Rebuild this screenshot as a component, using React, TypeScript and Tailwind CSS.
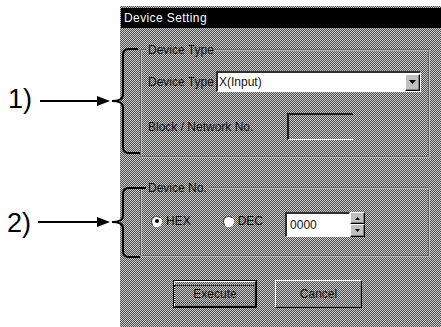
import React from "react";

const dither =
  "bg-[image:repeating-conic-gradient(#4a4a4a_0%_25%,#cfcfcf_0%_50%)] bg-[length:2px_2px]";

const Bevel = ({ className = "", children }: { className?: string; children?: React.ReactNode }) => (
  <div
    className={`border-t border-l border-t-white border-l-white border-r border-b border-r-black border-b-black bg-[#c0c0c0] shadow-[inset_-1px_-1px_0_#808080] ${className}`}
  >
    {children}
  </div>
);

const Radio = ({ label, checked }: { label: string; checked?: boolean }) => (
  <div className="flex items-center gap-[4px]">
    <span className="flex h-[11px] w-[11px] items-center justify-center rounded-full border border-t-[#404040] border-l-[#404040] border-r-white border-b-white bg-white">
      {checked && <span className="h-[4px] w-[4px] rounded-full bg-black" />}
    </span>
    <span>{label}</span>
  </div>
);

const App = () => {
  return (
    <div className="relative flex h-[327px] w-[441px] overflow-hidden bg-white font-['Liberation_Sans',Arial,sans-serif] text-black">
      {/* annotation labels */}
      <div className="w-[120px] shrink-0 text-[27px] leading-none">
        <div className="pl-[8px] pt-[86px]">1)</div>
        <div className="mt-[97px] pl-[7px]">2)</div>
      </div>

      {/* dialog */}
      <div className={`mt-[6px] flex flex-1 flex-col pt-[2px] text-[12px] leading-[14px] text-[#111] ${dither}`}>
        <div className="ml-[1px] flex h-[20px] items-center bg-black pl-[3px] tracking-[0.4px] text-white">
          Device Setting
        </div>

        <fieldset className="ml-[20px] mr-[11px] mt-[15px] border-2 border-[#b8b8b8] [border-style:groove] pb-[16px] pl-[6px] pt-[14px]">
          <legend className="-ml-[1px] px-[1px]">Device Type</legend>
          <div className="flex items-center">
            <span className="w-[68px]">Device Type</span>
            <div className="flex h-[21px] w-[205px] items-center border-t-2 border-l-2 border-t-[#303030] border-l-[#303030] border-b border-r border-b-white border-r-white bg-white pl-[1px]">
              <span className="flex-1">X(Input)</span>
              <Bevel className="flex h-[17px] w-[15px] items-center justify-center">
                <svg width="7" height="4" viewBox="0 0 7 4">
                  <path d="M0 0h7L3.5 4z" fill="#000" />
                </svg>
              </Bevel>
            </div>
          </div>
          <div className="mt-[21px] flex items-center">
            <span className="w-[139px]">Block / Network No.</span>
            <div className="h-[27px] w-[66px] border-t-2 border-l-2 border-t-[#202020] border-l-[#202020] border-b border-b-white" />
          </div>
        </fieldset>

        <fieldset className="ml-[20px] mr-[11px] mt-[23px] border-2 border-[#b8b8b8] [border-style:groove] pb-[18px] pl-[9px] pt-[17px]">
          <legend className="-ml-[4px] px-[1px]">Device No.</legend>
          <div className="flex items-start">
            <div className="mt-[2px] flex gap-[32px]">
              <Radio label="HEX" checked />
              <Radio label="DEC" />
            </div>
            <div className="ml-[22px] flex">
              <div className="flex h-[25px] w-[65px] items-center border-t-2 border-l-2 border-t-[#303030] border-l-[#303030] border-b border-r border-b-white border-r-white bg-white pl-[3px]">
                0000
              </div>
              <div className="flex w-[15px] flex-col">
                <Bevel className="flex h-[12px] items-center justify-center">
                  <svg width="5" height="3" viewBox="0 0 5 3">
                    <path d="M2.5 0L5 3H0z" fill="#000" />
                  </svg>
                </Bevel>
                <Bevel className="flex h-[13px] items-center justify-center">
                  <svg width="5" height="3" viewBox="0 0 5 3">
                    <path d="M0 0h5L2.5 3z" fill="#000" />
                  </svg>
                </Bevel>
              </div>
            </div>
          </div>
        </fieldset>

        <div className="ml-[53px] mt-[23px] flex gap-[18px]">
          <div className="h-[28px] w-[84px] border border-black">
            <Bevel className="flex h-full items-center justify-center bg-transparent">
              <span className="border border-dotted border-[#222] px-[18px] py-[1px]">Execute</span>
            </Bevel>
          </div>
          <Bevel className="flex h-[28px] w-[87px] items-center justify-center bg-transparent">
            Cancel
          </Bevel>
        </div>
      </div>

      {/* arrows and braces */}
      <svg className="pointer-events-none absolute inset-0" width="441" height="327" viewBox="0 0 441 327">
        <g stroke="#000" strokeWidth="2" fill="none">
          <path d="M40 101H100" />
          <path d="M138 49H129Q123 49 123 55V95Q123 101 112 101Q123 101 123 107V147Q123 153 129 153H140" />
          <path d="M38 222H100" />
          <path d="M146 188H129Q123 188 123 194V216Q123 222 112 222Q123 222 123 228V251Q123 257 129 257H140" />
        </g>
        <path d="M97 96L110 101L97 106z" fill="#000" />
        <path d="M97 217L110 222L97 227z" fill="#000" />
      </svg>
    </div>
  );
};

export default App;
